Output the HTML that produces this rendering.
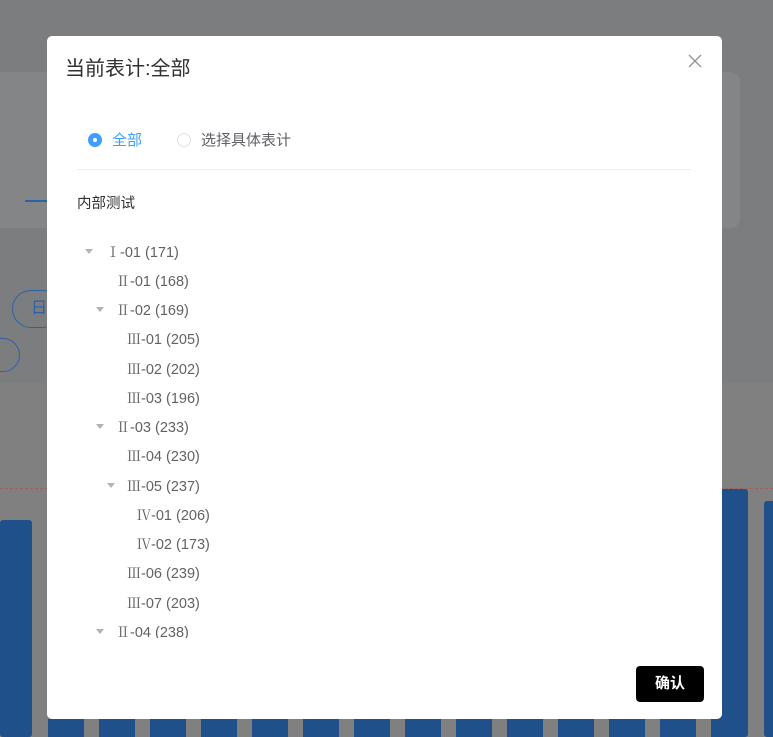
<!DOCTYPE html>
<html><head><meta charset="utf-8"><style>
*{margin:0;padding:0;box-sizing:border-box}
body{width:773px;height:737px;overflow:hidden;position:relative;background:#7c7d7f;font-family:"Liberation Sans","Noto Sans CJK SC",sans-serif}
.abs{position:absolute}
.modal{position:absolute;left:47px;top:36px;width:675px;height:683px;background:#fff;border-radius:5px}
.row{position:absolute;height:20px;line-height:20px;font-size:14.5px;color:#606266;white-space:nowrap}
.row b{font-weight:normal;font-family:"Noto Serif CJK SC",serif;font-size:14px}
.tri{position:absolute;width:0;height:0;border-left:4px solid transparent;border-right:4px solid transparent;border-top:5px solid #b0b3b8}
</style></head><body>
<div class="abs" style="left:-10px;top:72px;width:750px;height:156px;background:#848587;border-radius:10px"></div>
<div class="abs" style="left:25px;top:200px;width:25px;height:2px;background:#2a62a8"></div>
<div class="abs" style="left:0;top:383px;width:773px;height:354px;background:#808080"></div>
<div class="abs" style="left:0;top:488px;width:773px;border-top:1px dashed #a0605a"></div>
<div class="abs" style="left:0;top:547px;width:773px;border-top:1px dashed #9a7a40"></div>
<div class="abs" style="left:12px;top:290px;width:50px;height:38px;border:1px solid #2a62a8;border-radius:19px;color:#2a62a8;font-size:16px;line-height:36px;padding-left:18px">日</div>
<div class="abs" style="left:-30px;top:338px;width:50px;height:34px;border:1px solid #2a62a8;border-radius:17px"></div>
<div class="abs" style="left:0;top:520px;width:32px;height:217px;background:#20508a;border-radius:3px"></div>
<div class="abs" style="left:48px;top:719px;width:675px;height:18px;background:repeating-linear-gradient(90deg,#20508a 0 36px,#808080 36px 51px)"></div>
<div class="abs" style="left:714px;top:489px;width:34px;height:248px;background:#20508a;border-radius:3px"></div>
<div class="abs" style="left:764px;top:501px;width:12px;height:236px;background:#20508a;border-radius:3px"></div>
<div class="modal">
<div class="abs" style="left:18px;top:20px;font-size:20px;color:#303133;line-height:26px">当前表计:全部</div>
<svg class="abs" style="left:641px;top:18px" width="14" height="14"><path d="M1 1L13 13M13 1L1 13" stroke="#909399" stroke-width="1.3"/></svg>
<div class="abs" style="left:41px;top:97px;width:14px;height:14px;border-radius:50%;background:#409eff"></div>
<div class="abs" style="left:46px;top:102px;width:4px;height:4px;border-radius:50%;background:#fff"></div>
<div class="abs" style="left:65px;top:95px;font-size:15px;color:#409eff;line-height:20px">全部</div>
<div class="abs" style="left:130px;top:97px;width:14px;height:14px;border-radius:50%;border:1px solid #dcdfe6"></div>
<div class="abs" style="left:154px;top:95px;font-size:15px;color:#606266;line-height:20px">选择具体表计</div>
<div class="abs" style="left:30px;top:133px;width:614px;height:1px;background:#ebeef5"></div>
<div class="abs" style="left:30px;top:158px;font-size:14.5px;color:#303133;line-height:20px">内部测试</div>
<div class="abs" style="left:0;top:196px;width:675px;height:406px;overflow:hidden">
<div class="tri" style="left:38px;top:17px"></div><div class="row" style="left:59px;top:10px"><b>Ⅰ</b>-01 (171)</div>
<div class="row" style="left:69px;top:39px"><b>Ⅱ</b>-01 (168)</div>
<div class="tri" style="left:49px;top:75px"></div><div class="row" style="left:69px;top:68px"><b>Ⅱ</b>-02 (169)</div>
<div class="row" style="left:80px;top:97px"><b>Ⅲ</b>-01 (205)</div>
<div class="row" style="left:80px;top:127px"><b>Ⅲ</b>-02 (202)</div>
<div class="row" style="left:80px;top:156px"><b>Ⅲ</b>-03 (196)</div>
<div class="tri" style="left:49px;top:192px"></div><div class="row" style="left:69px;top:185px"><b>Ⅱ</b>-03 (233)</div>
<div class="row" style="left:80px;top:214px"><b>Ⅲ</b>-04 (230)</div>
<div class="tri" style="left:60px;top:251px"></div><div class="row" style="left:80px;top:244px"><b>Ⅲ</b>-05 (237)</div>
<div class="row" style="left:90px;top:273px"><b>Ⅳ</b>-01 (206)</div>
<div class="row" style="left:90px;top:302px"><b>Ⅳ</b>-02 (173)</div>
<div class="row" style="left:80px;top:331px"><b>Ⅲ</b>-06 (239)</div>
<div class="row" style="left:80px;top:361px"><b>Ⅲ</b>-07 (203)</div>
<div class="tri" style="left:49px;top:397px"></div><div class="row" style="left:69px;top:390px"><b>Ⅱ</b>-04 (238)</div>
</div>
<div class="abs" style="left:589px;top:630px;width:68px;height:36px;background:#000;border-radius:4px;color:#fff;font-size:15px;font-weight:bold;text-align:center;line-height:36px">确认</div>
</div>
</body></html>
